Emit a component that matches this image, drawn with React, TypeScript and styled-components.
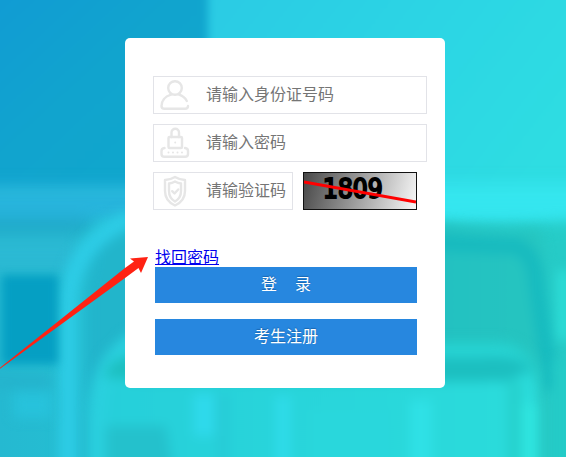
import React from "react";
import styled, { createGlobalStyle } from "styled-components";

const GlobalStyle = createGlobalStyle`
  *, *::before, *::after { box-sizing: border-box; }
  html, body, #root { min-height: 100%; }
  body {
    margin: 0;
    background: #25c8d6;
    font-family: "Liberation Sans", "Noto Sans CJK SC", sans-serif;
    font-size: 16px;
  }
`;

const Page = styled.main`
  position: relative;
  min-height: 100vh;
  padding: 38px 20px 38px 24px;
  display: flex;
  justify-content: center;
  align-items: flex-start;
  overflow: hidden;
`;

const Backdrop = styled.svg`
  position: absolute;
  inset: 0;
  width: 100%;
  height: 100%;
`;

const Card = styled.form`
  position: relative;
  width: 100%;
  max-width: 320px;
  padding: 38px 28px 33px;
  border-radius: 5px;
  background: #fff;
`;

const Fields = styled.div`
  display: flex;
  flex-direction: column;
  gap: 10px;
  margin-right: -10px;
`;

const CodeRow = styled.div`
  display: flex;
  gap: 10px;
`;

const Field = styled.label<{ $width?: number }>`
  display: flex;
  align-items: center;
  width: ${({ $width }) => ($width ? `${$width}px` : "100%")};
  height: 38px;
  padding-left: 5px;
  border: 1px solid #e2e3e8;
  background: #fff;
`;

const FieldIcon = styled.svg`
  flex: none;
  width: 32px;
  height: 32px;
  margin-right: 15px;
  fill: none;
  stroke: #e6e6e6;
  stroke-width: 2.4;
  stroke-linecap: round;
  stroke-linejoin: round;
`;

const TextInput = styled.input`
  flex: 1;
  min-width: 0;
  height: 100%;
  padding: 0;
  border: 0;
  outline: 0;
  background: transparent;
  color: #333;
  font: inherit;
  &::placeholder { color: #757575; opacity: 1; }
`;

const CaptchaButton = styled.button`
  width: 114px;
  height: 38px;
  padding: 0;
  border: 1px solid #111;
  background: linear-gradient(105deg, #484848, #f8f8f8);
  cursor: pointer;
  svg { display: block; width: 100%; height: 100%; }
`;

const Actions = styled.div`
  display: flex;
  flex-direction: column;
  align-items: flex-start;
  margin: 39px 0 0 2px;
`;

const RecoverLink = styled.a`
  color: #0000ee;
  line-height: 18px;
  text-decoration: underline;
`;

const ActionButton = styled.button`
  width: 100%;
  height: 36px;
  padding: 0 0 4px;
  border: 0;
  background: #2787df;
  color: #fff;
  font: inherit;
  text-shadow: 0 -1px 1px #1a66ae;
  cursor: pointer;
  & + & { margin-top: 16px; }
`;

const Pointer = styled.svg`
  position: absolute;
  top: 217px;
  right: 296px;
  width: 150px;
  height: 116px;
  pointer-events: none;
`;

function Scenery() {
  return (
    <Backdrop viewBox="0 0 566 457" preserveAspectRatio="none" aria-hidden="true">
      <defs>
        <linearGradient id="wall" x1="0" y1="0" x2="1" y2="1">
          <stop offset="0" stopColor="#1199d5" />
          <stop offset="0.5" stopColor="#11a4ce" />
          <stop offset="1" stopColor="#10a8cc" />
        </linearGradient>
        <linearGradient id="sky" x1="0" y1="0" x2="1" y2="0.5">
          <stop offset="0" stopColor="#2bcae4" />
          <stop offset="0.6" stopColor="#2cd6e4" />
          <stop offset="1" stopColor="#2edde2" />
        </linearGradient>
        <linearGradient id="floor" x1="0" y1="0" x2="1" y2="0">
          <stop offset="0" stopColor="#25b9d1" />
          <stop offset="0.35" stopColor="#25c6d3" />
          <stop offset="1" stopColor="#27cdc8" />
        </linearGradient>
        <linearGradient id="seat" x1="0" y1="0" x2="1" y2="0">
          <stop offset="0" stopColor="#22b4cc" />
          <stop offset="0.6" stopColor="#20bec2" />
          <stop offset="1" stopColor="#26c5c0" />
        </linearGradient>
        <linearGradient id="lower" x1="0" y1="0" x2="1" y2="0">
          <stop offset="0" stopColor="#26cfda" />
          <stop offset="1" stopColor="#2bdcdb" />
        </linearGradient>
        <filter id="soft" x="-20%" y="-20%" width="140%" height="140%" colorInterpolationFilters="sRGB">
          <feGaussianBlur stdDeviation="8" />
        </filter>
        <filter id="medium" x="-20%" y="-20%" width="140%" height="140%" colorInterpolationFilters="sRGB">
          <feGaussianBlur stdDeviation="6" />
        </filter>
        <filter id="fine" x="-20%" y="-20%" width="140%" height="140%" colorInterpolationFilters="sRGB">
          <feGaussianBlur stdDeviation="4" />
        </filter>
      </defs>
      <rect width="566" height="457" fill="url(#floor)" />
      <g filter="url(#fine)">
        <rect x="-30" y="-30" width="240" height="220" fill="url(#wall)" />
        <rect x="208" y="-30" width="390" height="250" fill="url(#sky)" />
      </g>
      <g filter="url(#soft)">
        <rect x="-30" y="186" width="240" height="34" fill="#27b4dc" />
        <rect x="-30" y="220" width="120" height="12" fill="#1ea5c4" />
        <rect x="-30" y="236" width="110" height="38" fill="#2bb9d3" />
        <rect x="420" y="184" width="180" height="36" fill="#35e6ef" />
        <path d="M420 222 Q500 238 600 218 V490 H420Z" fill="#26cbc7" />
      </g>
      <g filter="url(#medium)">
        <path d="M86 480 V300 Q88 228 140 224 H440 Q500 234 540 230 L546 270 V480Z" fill="url(#seat)" />
        <path d="M430 242 Q480 246 516 246 Q534 254 536 280 L552 390" fill="none" stroke="#16babf" strokeWidth="15" />
        <path d="M68 480 V310 Q68 244 132 218" fill="none" stroke="#2dcce6" strokeWidth="18" />
        <path d="M563 270 V340" stroke="#2ee0da" strokeWidth="11" />
      </g>
      <g filter="url(#fine)">
        <rect x="2" y="275" width="56" height="89" fill="#059fc3" />
      </g>
      <g filter="url(#medium)">
        <rect x="-20" y="376" width="70" height="12" fill="#24b2cc" />
        <rect x="14" y="392" width="38" height="26" fill="#27c2db" />
        <path d="M104 490 V425 Q104 350 160 348 H494 Q536 350 538 390 V490Z" fill="url(#lower)" />
        <path d="M97 490 V420 Q96 362 138 338" fill="none" stroke="#2ad0de" strokeWidth="18" />
        <path d="M106 426 H166 L176 490 H106Z" fill="#24c1cc" />
        <path d="M118 378 Q118 366 150 369 H480 Q514 366 518 376" fill="none" stroke="#1cbfc0" strokeWidth="25" />
        <path d="M430 345 H500 Q530 348 536 380" fill="none" stroke="#25cecb" strokeWidth="9" />
        <rect x="194" y="394" width="20" height="42" fill="#2fdaec" />
        <rect x="217" y="394" width="12" height="80" fill="#27cbd6" />
        <rect x="276" y="396" width="14" height="90" fill="#2fdcea" />
        <rect x="310" y="410" width="80" height="80" fill="#29d7dc" />
        <rect x="410" y="400" width="22" height="90" fill="#2fe1e6" />
        <rect x="508" y="380" width="13" height="110" fill="#25d0cc" />
        <rect x="521" y="404" width="18" height="90" fill="#2fe5e0" />
        <rect x="553" y="360" width="30" height="130" fill="#24cbc7" />
      </g>
    </Backdrop>
  );
}

function PersonIcon() {
  return (
    <FieldIcon viewBox="0 0 32 32" aria-hidden="true">
      <circle cx="16" cy="9" r="6.800" />
      <path d="M12 15.700C5.500 17.500 2.500 22.500 2.500 27Q2.500 29.800 5.500 29.800H26Q29 29.800 29 27M20 15.700C24 16.900 26.300 19 27.800 22" />
    </FieldIcon>
  );
}

function LockIcon() {
  return (
    <FieldIcon viewBox="0 0 32 32" aria-hidden="true">
      <rect x="9.500" y="10" width="13.500" height="11" rx="1" />
      <path d="M12.500 10V5.500A3.700 3.700 0 0 1 20 5.500V10M5.500 21Q2.500 21.300 2.500 24V27Q2.500 29.800 5.500 29.800H26Q29 29.800 29 27V24Q29 21.300 26 21" />
      <path strokeWidth="2" d="M16.200 15.500V15.600M9.500 25.500V25.600M14 25.500V25.600M18.500 25.500V25.600M23 25.500V25.600" />
    </FieldIcon>
  );
}

function ShieldIcon() {
  return (
    <FieldIcon viewBox="0 0 32 32" aria-hidden="true">
      <path d="M16 2Q11 5 6 5V16Q6 26 16 30.500Q26 26 26 16V5Q21 5 16 2Z" />
      <path d="M16 6.500Q13 8.200 10 8.500V16Q10 23 16 26.500Q22 23 22 16V8.500Q19 8.200 16 6.500Z" />
      <path d="M13.200 16.200L15.500 18.500L19.200 14.500" />
    </FieldIcon>
  );
}

export default function App() {
  return (
    <>
      <GlobalStyle />
      <Page>
        <Scenery />
        <Card onSubmit={(event: React.FormEvent) => event.preventDefault()}>
          <Fields>
            <Field>
              <PersonIcon />
              <TextInput type="text" aria-label="身份证号码" placeholder="请输入身份证号码" />
            </Field>
            <Field>
              <LockIcon />
              <TextInput type="password" aria-label="密码" placeholder="请输入密码" />
            </Field>
            <CodeRow>
              <Field $width={140}>
                <ShieldIcon />
                <TextInput type="text" aria-label="验证码" placeholder="请输验证码" />
              </Field>
              <CaptchaButton type="button" aria-label="1809">
                <svg viewBox="0 0 112 36">
                  <text
                    x="19"
                    y="25"
                    fontFamily="'DejaVu Sans Condensed', 'DejaVu Sans'"
                    fontSize="26"
                    fill="#000"
                    stroke="#000"
                    strokeWidth="2"
                  >
                    1809
                  </text>
                  <path d="M0 9L112 29" stroke="#f00" strokeWidth="3" />
                </svg>
              </CaptchaButton>
            </CodeRow>
          </Fields>
          <Actions>
            <RecoverLink href="#recover">找回密码</RecoverLink>
            <ActionButton type="submit">登{"\u00a0\u00a0\u00a0\u00a0"}录</ActionButton>
            <ActionButton type="button">考生注册</ActionButton>
          </Actions>
          <Pointer viewBox="0 0 150 116" aria-hidden="true">
            <path d="M0 113.500L126 13L135 6.500L131 3.500L149 2L142 18L139.500 13L126 23L0 114.500Z" fill="#ff2213" />
          </Pointer>
        </Card>
      </Page>
    </>
  );
}
